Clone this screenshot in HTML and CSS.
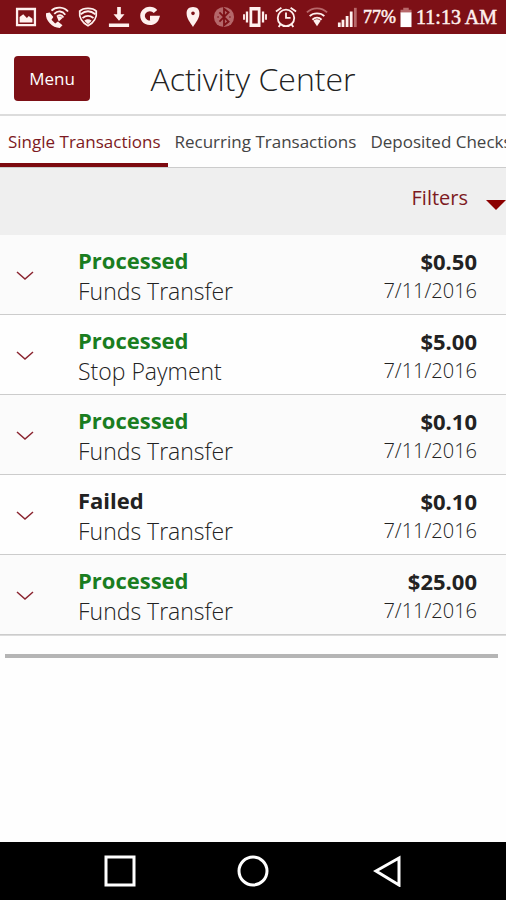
FILE: index.html
```html
<!DOCTYPE html>
<html lang="en">
<head>
  <meta charset="UTF-8">
  <meta name="viewport" content="width=device-width, initial-scale=1">
  <title>Activity Center</title>
  <link rel="stylesheet" href="styles.css">
</head>
<body>

<!-- Status Bar -->
<div class="status-bar">
  <div class="status-group">
    <svg class="icon" viewBox="0 0 24 24"><path fill-rule="evenodd" d="M1 2h22v20H1zM3.500 4.500v15h17v-15z"/><path d="M5 18v-6l4-3 4 4 2-2 4 3v4z"/></svg>
    <svg class="icon" viewBox="0 0 24 24"><path d="M0 8l4-1 4 5-2 3 4 4 3-2 5 4-3 3C7 24-1 16 0 8z"/><path class="line" d="M6 5c5-5 14-4 18 1M9 8.500c4-4 9-3 12 1M12 11.500c2-2 5-2 7 1"/><path d="M12 12c2-1 4-1 6 1l-4 4z"/></svg>
    <svg class="icon" viewBox="0 0 24 24"><path class="line" d="M12 2.500c4 0 7 1 9 3 1 7-3 13-9 16-6-3-10-9-9-16 2-2 5-3 9-3z"/><path class="line" d="M4 9c5-4 11-4 16 0M6 13c4-3 8-3 12 0"/><path d="M8 16c3-2 5-2 8 0l-4 4z"/></svg>
    <svg class="icon" viewBox="0 0 24 24"><path d="M10 1h4v8h4l-6 7-6-7h4zM1 19h22v4H1z"/></svg>
    <svg class="icon" viewBox="0 0 24 24"><path class="ring" d="M18 6A8 7.500 0 1 0 19.500 13H12"/></svg>
  </div>
  <div class="status-group">
    <svg class="icon" viewBox="0 0 24 24"><path fill-rule="evenodd" d="M12 1c5 0 7 3 7 7 0 6-4 10-7 15-3-5-7-9-7-15 0-4 2-7 7-7zM12 6a2 2 0 1 0 0 4 2 2 0 0 0 0-4z"/></svg>
    <svg class="icon" viewBox="0 0 24 24"><circle class="bt-back" cx="12" cy="12" r="11"/><path class="bt-mark" d="M7 7l10 10-5 4V3l5 4L7 17M5 12h1M18 12h1"/></svg>
    <svg class="icon" viewBox="0 0 26 24"><path fill-rule="evenodd" d="M7 1h12v22H7zM10 5v14h6V5zM3 6h2.500v12H3zM0 9h2v6H0zM20.500 6H23v12h-2.500zM24 9h2v6h-2z"/></svg>
    <svg class="icon" viewBox="0 0 24 24"><circle class="line" cx="12" cy="13" r="9"/><path class="line" d="M12 7v6h5M1 6l6-4M17 2l6 4M6 20l-2 3M18 20l2 3"/></svg>
    <svg class="icon" viewBox="0 0 24 24"><path class="line faint" d="M1 7c6-6 16-6 22 0"/><path class="line" d="M4 11c4-4 12-4 16 0M7 15c3-3 7-3 10 0"/><path d="M8 16c3-2 5-2 8 0l-4 6z"/></svg>
    <svg class="icon" viewBox="0 0 24 24"><path d="M1 18h3v5H1zM5 15h3v8H5zM9.500 11h3v12h-3zM14 6h3v17h-3z"/><path class="dim" d="M18.500 2h3v21h-3z"/></svg>
    <span class="percent">77%</span>
    <svg class="battery" viewBox="0 0 14 24"><path class="dim" d="M4 2h6v2h3v4H1V4h3z"/><path d="M1 7h12v16H1z"/></svg>
    <span class="clock">11:13 AM</span>
  </div>
</div>

<!-- Header -->
<header class="header">
  <button class="menu-button" type="button">Menu</button>
  <h1>Activity Center</h1>
</header>

<!-- Tabs -->
<nav class="tabs">
  <a class="tab active" href="#single">Single Transactions</a>
  <a class="tab" href="#recurring">Recurring Transactions</a>
  <a class="tab" href="#checks">Deposited Checks</a>
</nav>

<main class="content">
  <div class="filter-bar">
    <button class="filter-button" type="button">Filters <span class="caret"></span></button>
  </div>

  <!-- Transaction List -->
  <ul class="transactions">
    <li class="transaction">
      <button class="expand" type="button" aria-label="Show details"><svg viewBox="0 0 18 10"><path d="M1 1l8 7 8-7"/></svg></button>
      <div class="details"><strong class="processed">Processed</strong><span>Funds Transfer</span></div>
      <div class="amount"><strong>$0.50</strong><span>7/11/2016</span></div>
    </li>
    <li class="transaction">
      <button class="expand" type="button" aria-label="Show details"><svg viewBox="0 0 18 10"><path d="M1 1l8 7 8-7"/></svg></button>
      <div class="details"><strong class="processed">Processed</strong><span>Stop Payment</span></div>
      <div class="amount"><strong>$5.00</strong><span>7/11/2016</span></div>
    </li>
    <li class="transaction">
      <button class="expand" type="button" aria-label="Show details"><svg viewBox="0 0 18 10"><path d="M1 1l8 7 8-7"/></svg></button>
      <div class="details"><strong class="processed">Processed</strong><span>Funds Transfer</span></div>
      <div class="amount"><strong>$0.10</strong><span>7/11/2016</span></div>
    </li>
    <li class="transaction">
      <button class="expand" type="button" aria-label="Show details"><svg viewBox="0 0 18 10"><path d="M1 1l8 7 8-7"/></svg></button>
      <div class="details"><strong>Failed</strong><span>Funds Transfer</span></div>
      <div class="amount"><strong>$0.10</strong><span>7/11/2016</span></div>
    </li>
    <li class="transaction">
      <button class="expand" type="button" aria-label="Show details"><svg viewBox="0 0 18 10"><path d="M1 1l8 7 8-7"/></svg></button>
      <div class="details"><strong class="processed">Processed</strong><span>Funds Transfer</span></div>
      <div class="amount"><strong>$25.00</strong><span>7/11/2016</span></div>
    </li>
  </ul>
  <hr class="list-end">
</main>

<!-- Navigation Bar -->
<div class="nav-bar">
  <button type="button" aria-label="Recent apps"><svg viewBox="0 0 32 32"><path d="M2 2h28v28H2z"/></svg></button>
  <button type="button" aria-label="Home"><svg viewBox="0 0 32 32"><circle cx="16" cy="16" r="14"/></svg></button>
  <button type="button" aria-label="Back"><svg viewBox="0 0 32 32"><path d="M29 3v27L6 16z"/></svg></button>
</div>

</body>
</html>
```

FILE: styles.css
```css
* {
  box-sizing: border-box;
}
body {
  font-family: "Open Sans", "Noto Sans", sans-serif;
  margin: 0;
  min-height: 100vh;
  display: flex;
  flex-direction: column;
  background: #fefefe;
  color: #222;
}
button {
  font-family: inherit;
  border: 0;
  padding: 0;
  background: none;
}

/* Status bar */
.status-bar {
  height: 34px;
  padding: 0 9px 0 14px;
  display: flex;
  justify-content: space-between;
  align-items: center;
  background: #7d1016;
  color: #fff0ee;
  font-family: "Liberation Serif", serif;
}
.status-group {
  display: flex;
  align-items: center;
  gap: 7px;
}
.icon {
  width: 24px;
  height: 22px;
  fill: #fff0ee;
}
.line, .ring {
  fill: none;
  stroke: #fff0ee;
  stroke-width: 2;
}
.ring {
  stroke-width: 5;
}
.faint {
  stroke: #b8686a;
}
.dim {
  fill: #b8686a;
}
.bt-back {
  fill: #b5676a;
}
.bt-mark {
  fill: none;
  stroke: #7d1016;
  stroke-width: 2;
}
.battery {
  width: 14px;
  height: 22px;
  fill: #fff;
}
.percent {
  font-size: 18px;
}
.clock {
  font-size: 20px;
}
.battery, .clock, .percent {
  margin-left: -4px;
  -webkit-text-stroke: 0.5px #fff0ee;
}

/* Header */
.header {
  height: 82px;
  padding: 8px 14px 0;
  display: grid;
  grid-template-columns: 76px 1fr 76px;
  align-items: center;
  border-bottom: 2px solid #dcdcdc;
}
.menu-button {
  height: 45px;
  border-radius: 4px;
  background: #7d1016;
  color: #fff;
  font-size: 17px;
}
.header h1 {
  margin: 0;
  font-size: 32px;
  font-weight: 300;
  text-align: center;
}

/* Tabs */
.tabs {
  height: 52px;
  display: flex;
  overflow: hidden;
  border-bottom: 1px solid #ccc;
}
.tab {
  flex: none;
  padding: 0 7px;
  line-height: 52px;
  font-size: 17px;
  color: #444;
  text-decoration: none;
}
.tab.active {
  padding-left: 8px;
  border-bottom: 4px solid #7d0a10;
  color: #7d1a22;
}

/* Filters */
.content {
  flex: 1;
}
.filter-bar {
  height: 67px;
  display: flex;
  justify-content: flex-end;
  align-items: center;
  background: #efefef;
}
.filter-button {
  display: flex;
  align-items: center;
  gap: 18px;
  padding-bottom: 8px;
  color: #7d1a22;
  font-size: 20px;
}
.caret {
  margin-top: 14px;
  border: 10px solid transparent;
  border-top-color: #8b0000;
  border-bottom: 0;
}

/* Transactions */
.transactions {
  margin: 0;
  padding: 0;
  list-style: none;
  border-bottom: 1px solid #dcdcdc;
}
.transaction {
  height: 80px;
  padding: 3px 29px 0 0;
  display: flex;
  align-items: center;
  border-bottom: 1px solid #ccc;
}
.transaction:nth-child(odd) {
  background: #fbfbfb;
}
.expand {
  width: 50px;
  height: 50px;
  margin-right: 28px;
}
.expand svg {
  width: 18px;
  height: 10px;
  fill: none;
  stroke: #8b2530;
  stroke-width: 1.5;
}
.details, .amount {
  display: flex;
  flex-direction: column;
  line-height: 31px;
}
.details {
  flex: 1;
  font-size: 22px;
}
.details span, .amount span {
  font-weight: 300;
}
.details span {
  font-size: 23px;
}
.amount {
  text-align: right;
  line-height: 29px;
  font-size: 20px;
}
.amount strong {
  font-size: 22px;
}
.processed {
  color: #1a7d1f;
}
.list-end {
  margin: 18px 8px 0 5px;
  border: 0;
  border-top: 4px solid #b5b5b5;
}

/* Navigation bar */
.nav-bar {
  height: 58px;
  padding: 0 53px;
  display: flex;
  background: #000;
}
.nav-bar button {
  flex: 1;
}
.nav-bar svg {
  width: 32px;
  height: 32px;
  vertical-align: middle;
  fill: none;
  stroke: #fff;
  stroke-width: 3;
}
```
